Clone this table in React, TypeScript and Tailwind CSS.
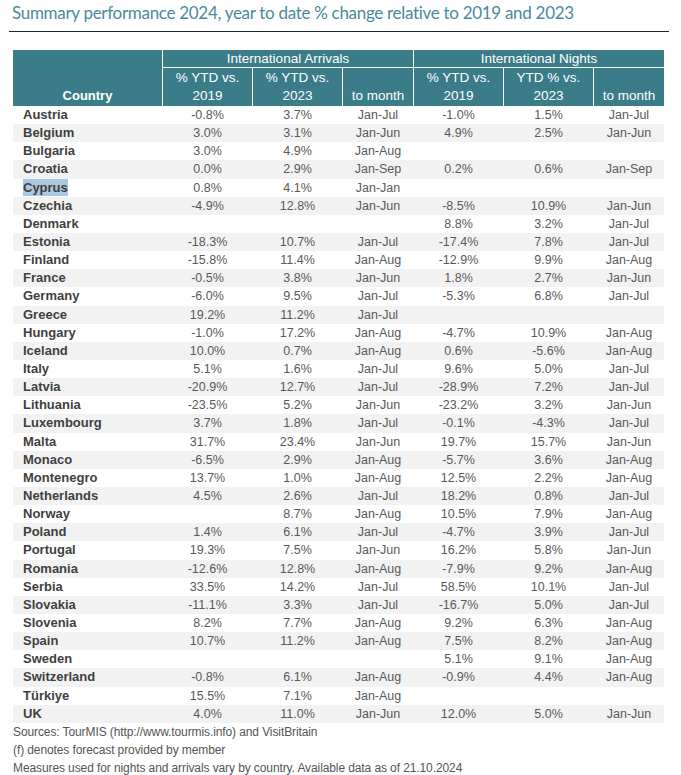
import React from "react";

type Row = [string, string, string, string, string, string, string];

const rows: Row[] = [
  ["Austria", "-0.8%", "3.7%", "Jan-Jul", "-1.0%", "1.5%", "Jan-Jul"],
  ["Belgium", "3.0%", "3.1%", "Jan-Jun", "4.9%", "2.5%", "Jan-Jun"],
  ["Bulgaria", "3.0%", "4.9%", "Jan-Aug", "", "", ""],
  ["Croatia", "0.0%", "2.9%", "Jan-Sep", "0.2%", "0.6%", "Jan-Sep"],
  ["Cyprus", "0.8%", "4.1%", "Jan-Jan", "", "", ""],
  ["Czechia", "-4.9%", "12.8%", "Jan-Jun", "-8.5%", "10.9%", "Jan-Jun"],
  ["Denmark", "", "", "", "8.8%", "3.2%", "Jan-Jul"],
  ["Estonia", "-18.3%", "10.7%", "Jan-Jul", "-17.4%", "7.8%", "Jan-Jul"],
  ["Finland", "-15.8%", "11.4%", "Jan-Aug", "-12.9%", "9.9%", "Jan-Aug"],
  ["France", "-0.5%", "3.8%", "Jan-Jun", "1.8%", "2.7%", "Jan-Jun"],
  ["Germany", "-6.0%", "9.5%", "Jan-Jul", "-5.3%", "6.8%", "Jan-Jul"],
  ["Greece", "19.2%", "11.2%", "Jan-Jul", "", "", ""],
  ["Hungary", "-1.0%", "17.2%", "Jan-Aug", "-4.7%", "10.9%", "Jan-Aug"],
  ["Iceland", "10.0%", "0.7%", "Jan-Aug", "0.6%", "-5.6%", "Jan-Aug"],
  ["Italy", "5.1%", "1.6%", "Jan-Jul", "9.6%", "5.0%", "Jan-Jul"],
  ["Latvia", "-20.9%", "12.7%", "Jan-Jul", "-28.9%", "7.2%", "Jan-Jul"],
  ["Lithuania", "-23.5%", "5.2%", "Jan-Jun", "-23.2%", "3.2%", "Jan-Jun"],
  ["Luxembourg", "3.7%", "1.8%", "Jan-Jul", "-0.1%", "-4.3%", "Jan-Jul"],
  ["Malta", "31.7%", "23.4%", "Jan-Jun", "19.7%", "15.7%", "Jan-Jun"],
  ["Monaco", "-6.5%", "2.9%", "Jan-Aug", "-5.7%", "3.6%", "Jan-Aug"],
  ["Montenegro", "13.7%", "1.0%", "Jan-Aug", "12.5%", "2.2%", "Jan-Aug"],
  ["Netherlands", "4.5%", "2.6%", "Jan-Jul", "18.2%", "0.8%", "Jan-Jul"],
  ["Norway", "", "8.7%", "Jan-Aug", "10.5%", "7.9%", "Jan-Aug"],
  ["Poland", "1.4%", "6.1%", "Jan-Jul", "-4.7%", "3.9%", "Jan-Jul"],
  ["Portugal", "19.3%", "7.5%", "Jan-Jun", "16.2%", "5.8%", "Jan-Jun"],
  ["Romania", "-12.6%", "12.8%", "Jan-Aug", "-7.9%", "9.2%", "Jan-Aug"],
  ["Serbia", "33.5%", "14.2%", "Jan-Jul", "58.5%", "10.1%", "Jan-Jul"],
  ["Slovakia", "-11.1%", "3.3%", "Jan-Jul", "-16.7%", "5.0%", "Jan-Jul"],
  ["Slovenia", "8.2%", "7.7%", "Jan-Aug", "9.2%", "6.3%", "Jan-Aug"],
  ["Spain", "10.7%", "11.2%", "Jan-Aug", "7.5%", "8.2%", "Jan-Aug"],
  ["Sweden", "", "", "", "5.1%", "9.1%", "Jan-Aug"],
  ["Switzerland", "-0.8%", "6.1%", "Jan-Aug", "-0.9%", "4.4%", "Jan-Aug"],
  ["Türkiye", "15.5%", "7.1%", "Jan-Aug", "", "", ""],
  ["UK", "4.0%", "11.0%", "Jan-Jun", "12.0%", "5.0%", "Jan-Jun"],
];

const cols = "grid grid-cols-[149px_89px_89px_70px_89px_89px_70px] gap-x-px";

function HeadCell({ top, bottom }: { top?: string; bottom: string }) {
  return (
    <div className="bg-[#3b7c89] flex flex-col items-center justify-start pt-[1px] leading-[18px]">
      <span className="h-[18px]">{top}</span>
      <span>{bottom}</span>
    </div>
  );
}

export default function App() {
  return (
    <div className="w-[681px] h-[775px] bg-white font-['Liberation_Sans',Arial,sans-serif]">
      <div className="pl-[12px] pt-[2px] h-[24px] leading-[22px] text-[17px] text-[#4a8a99] font-['Lato',sans-serif] tracking-[-0.3px]">
        Summary performance 2024, year to date % change relative to 2019 and 2023
      </div>
      <div className="mt-[7px] ml-[9px] w-[660px] h-px bg-[#1d2a2f]" />

      <div className="mt-[18px] ml-[13px] w-[651px]">
        {/* header */}
        <div className={`${cols} gap-y-px bg-white grid-rows-[17px_38px] text-white text-[13.5px]`}>
          <div className="row-span-2 bg-[#3b7c89] flex items-end justify-center pb-[1px] font-bold text-[13px] leading-[18px]">
            Country
          </div>
          <div className="col-span-3 bg-[#3b7c89] flex items-center justify-center leading-[17px]">
            International Arrivals
          </div>
          <div className="col-span-3 bg-[#3b7c89] flex items-center justify-center leading-[17px]">
            International Nights
          </div>
          <HeadCell top="% YTD vs." bottom="2019" />
          <HeadCell top="% YTD vs." bottom="2023" />
          <HeadCell bottom="to month" />
          <HeadCell top="% YTD vs." bottom="2019" />
          <HeadCell top="YTD % vs." bottom="2023" />
          <HeadCell bottom="to month" />
        </div>

        {/* body */}
        <div>
          {rows.map((r, i) => (
            <div
              key={r[0]}
              className={`${cols} h-[18.15px] leading-[18px] ${i % 2 === 1 ? "bg-[#f2f2f2]" : "bg-white"}`}
            >
              <div className="pl-[10px] font-bold text-[13px] text-[#3f3f3f]">
                {r[0] === "Cyprus" ? (
                  <span className="bg-[#a9c7de] py-[1px]">{r[0]}</span>
                ) : (
                  r[0]
                )}
              </div>
              {r.slice(1).map((v, j) => (
                <div key={j} className="text-center text-[12.5px] text-[#595959]">
                  {v}
                </div>
              ))}
            </div>
          ))}
        </div>
      </div>

      <div className="pl-[13px] text-[12px] tracking-[-0.1px] leading-[18px] text-[#555555]">
        <p>Sources: TourMIS (http://www.tourmis.info) and VisitBritain</p>
        <p>(f) denotes forecast provided by member</p>
        <p>Measures used for nights and arrivals vary by country. Available data as of 21.10.2024</p>
      </div>
    </div>
  );
}
